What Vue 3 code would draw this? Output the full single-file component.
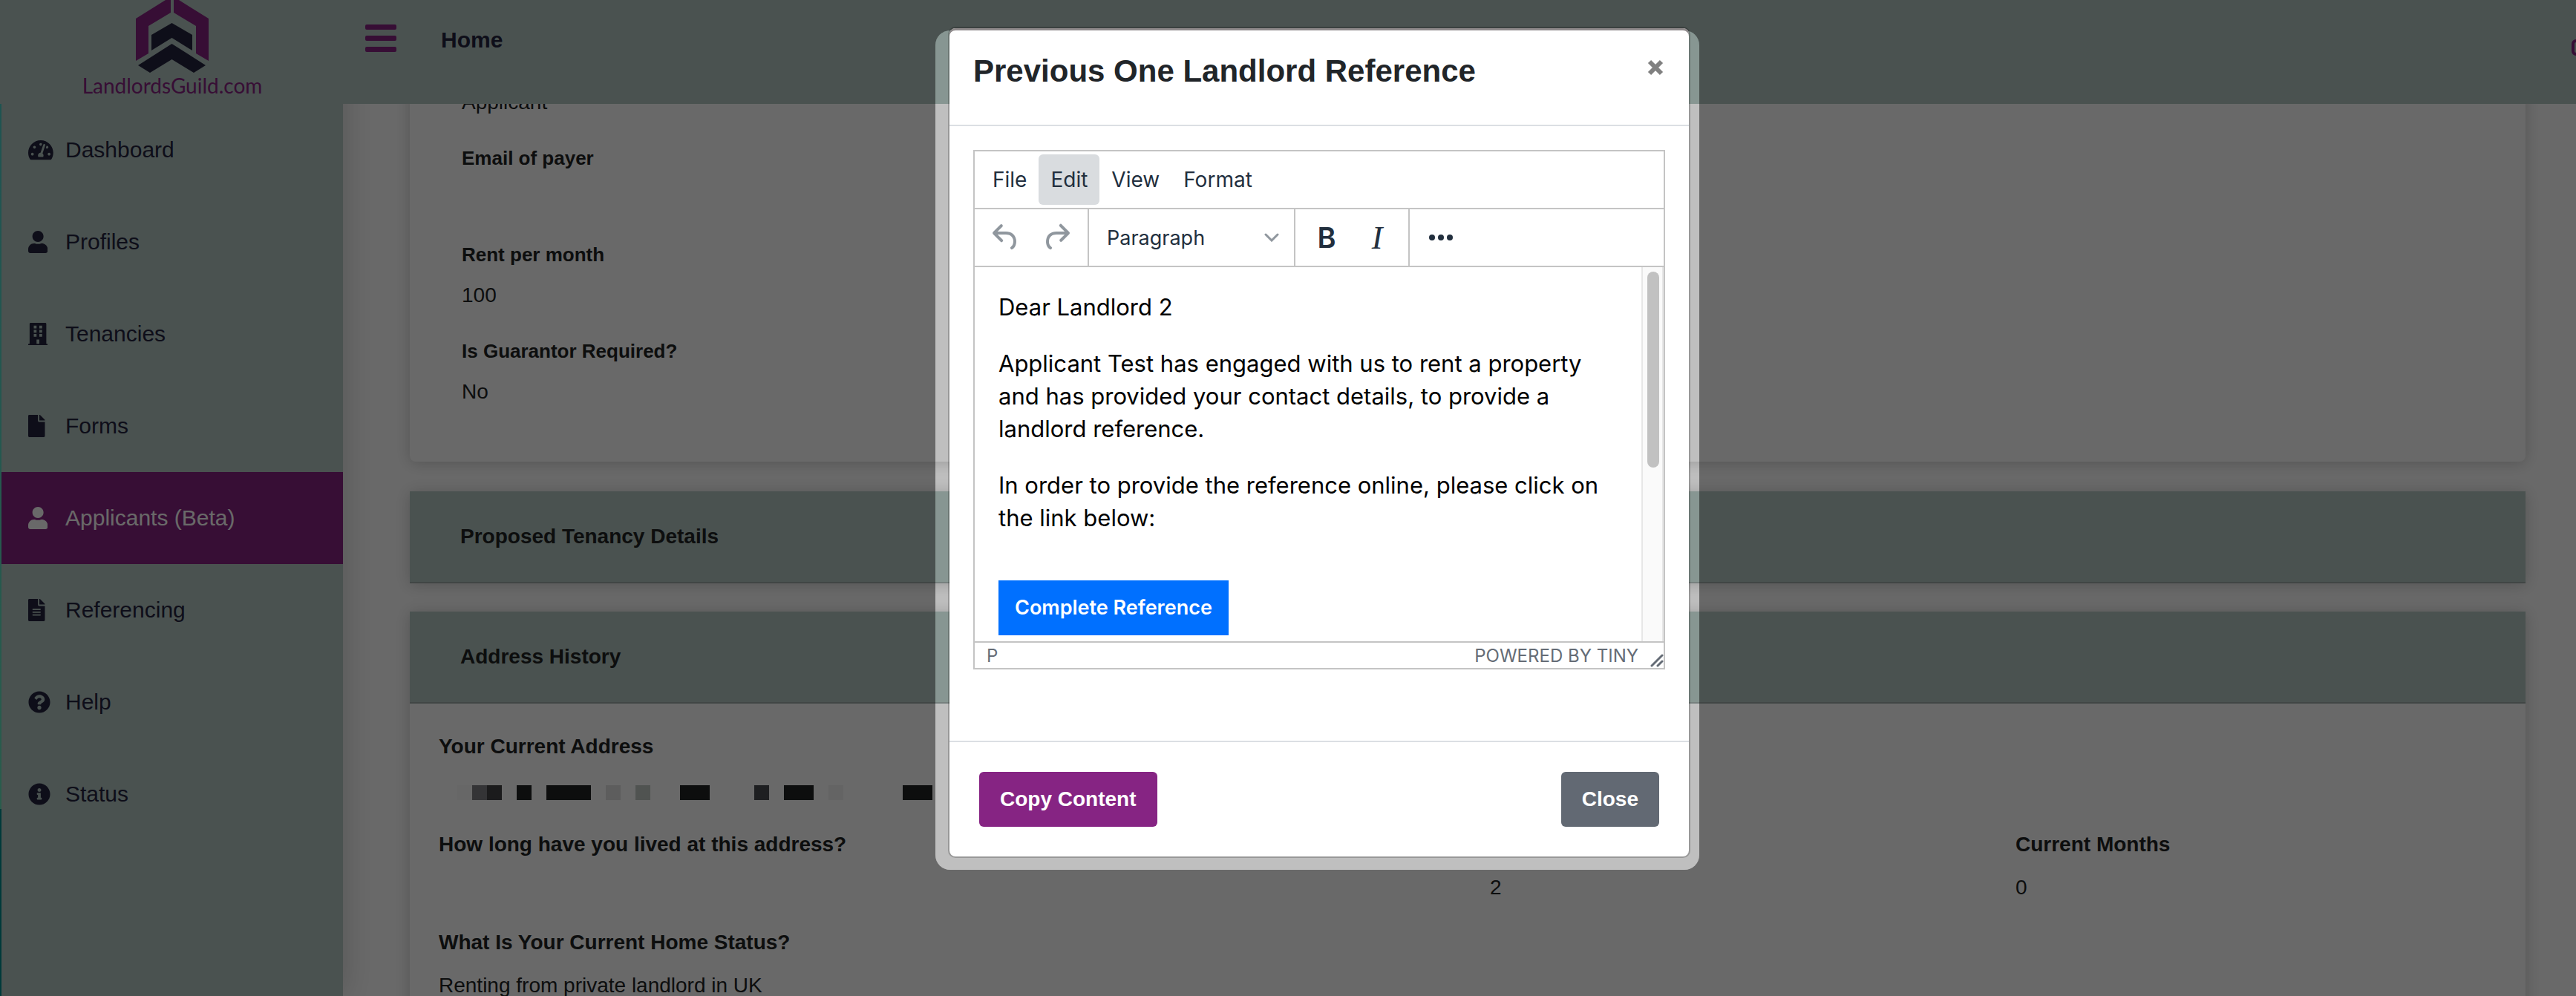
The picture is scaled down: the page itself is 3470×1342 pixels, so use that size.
<script setup>
import { ref } from 'vue'

const icons = {
  gauge: {
    w: 576,
    d: 'M288 32C128.94 32 0 160.94 0 320c0 52.8 14.25 102.26 39.06 144.8 5.61 9.62 16.3 15.2 27.44 15.2h443c11.14 0 21.83-5.58 27.44-15.2C561.75 422.26 576 372.8 576 320c0-159.06-128.94-288-288-288zm0 64c14.71 0 26.58 10.13 30.32 23.65-1.11 2.26-2.64 4.23-3.45 6.67l-9.22 27.67c-5.13 3.49-10.97 6.01-17.64 6.01-17.67 0-32-14.33-32-32S270.33 96 288 96zM96 384c-17.67 0-32-14.33-32-32s14.33-32 32-32 32 14.33 32 32-14.33 32-32 32zm48-160c-17.67 0-32-14.33-32-32s14.33-32 32-32 32 14.33 32 32-14.33 32-32 32zm246.77-72.41l-61.33 184C343.13 347.33 352 364.54 352 384c0 11.72-3.38 22.55-8.88 32H232.88c-5.5-9.45-8.88-20.28-8.88-32 0-33.94 26.5-61.43 59.9-63.59l61.34-184.01c4.17-12.56 17.73-19.45 30.36-15.17 12.57 4.19 19.35 17.79 15.17 30.36zm14.66 57.2l15.52-46.55c3.47-1.29 7.13-2.23 11.05-2.23 17.67 0 32 14.33 32 32s-14.33 32-32 32c-11.38-.01-20.89-6.28-26.57-15.22zM480 384c-17.67 0-32-14.33-32-32s14.33-32 32-32 32 14.33 32 32-14.33 32-32 32z'
  },
  user: {
    w: 448,
    d: 'M224 256c70.7 0 128-57.3 128-128S294.7 0 224 0 96 57.3 96 128s57.3 128 128 128zm89.6 32h-16.7c-22.2 10.2-46.9 16-72.9 16s-50.6-5.8-72.9-16h-16.7C60.2 288 0 348.2 0 422.4V464c0 26.5 21.5 48 48 48h352c26.5 0 48-21.5 48-48v-41.6c0-74.2-60.2-134.4-134.4-134.4z'
  },
  building: {
    w: 448,
    d: 'M56 0H392a24 24 0 0 1 24 24V480H436a12 12 0 0 1 12 12V512H0V492a12 12 0 0 1 12-12H32V24A24 24 0 0 1 56 0zM128 64V128H192V64zM256 64V128H320V64zM128 160V224H192V160zM256 160V224H320V160zM128 256V320H192V256zM256 256V320H320V256zM192 384V480H256V384z'
  },
  file: {
    w: 384,
    d: 'M224 136V0H24C10.7 0 0 10.7 0 24v464c0 13.3 10.7 24 24 24h336c13.3 0 24-10.7 24-24V160H248c-13.2 0-24-10.8-24-24zm160-14.1v6.1H256V0h6.1c6.4 0 12.5 2.5 17 7l97.9 98c4.5 4.5 7 10.6 7 16.9z'
  },
  fileLines: {
    w: 384,
    d: 'M224 136V0H24C10.7 0 0 10.7 0 24v464c0 13.3 10.7 24 24 24h336c13.3 0 24-10.7 24-24V160H248c-13.2 0-24-10.8-24-24zm64 236c0 6.6-5.4 12-12 12H108c-6.6 0-12-5.4-12-12v-8c0-6.6 5.4-12 12-12h168c6.6 0 12 5.4 12 12v8zm0-64c0 6.6-5.4 12-12 12H108c-6.6 0-12-5.4-12-12v-8c0-6.6 5.4-12 12-12h168c6.6 0 12 5.4 12 12v8zm0-72v8c0 6.6-5.4 12-12 12H108c-6.6 0-12-5.4-12-12v-8c0-6.6 5.4-12 12-12h168c6.6 0 12 5.4 12 12zm96-114.1v6.1H256V0h6.1c6.4 0 12.5 2.5 17 7l97.9 98c4.5 4.5 7 10.6 7 16.9z'
  },
  question: {
    w: 512,
    d: 'M504 256c0 136.997-111.043 248-248 248S8 392.997 8 256C8 119.083 119.043 8 256 8s248 111.083 248 248zM262.655 90c-54.497 0-89.255 22.957-116.549 63.758-3.536 5.286-2.353 12.415 2.715 16.258l34.699 26.31c5.205 3.947 12.621 3.008 16.665-2.122 17.864-22.658 30.113-35.797 57.303-35.797 20.429 0 45.698 13.148 45.698 32.958 0 14.976-12.363 22.667-32.534 33.976C247.128 238.528 216 254.941 216 296v4c0 6.627 5.373 12 12 12h56c6.627 0 12-5.373 12-12v-1.333c0-28.462 83.186-29.647 83.186-106.667 0-58.002-60.165-102-116.531-102zM256 338c-25.365 0-46 20.635-46 46 0 25.364 20.635 46 46 46s46-20.636 46-46c0-25.365-20.635-46-46-46z'
  },
  info: {
    w: 512,
    d: 'M256 8C119.043 8 8 119.083 8 256c0 136.997 111.043 248 248 248s248-111.003 248-248C504 119.083 392.957 8 256 8zm0 110c23.196 0 42 18.804 42 42s-18.804 42-42 42-42-18.804-42-42 18.804-42 42-42zm56 254c0 6.627-5.373 12-12 12h-88c-6.627 0-12-5.373-12-12v-24c0-6.627 5.373-12 12-12h12v-64h-12c-6.627 0-12-5.373-12-12v-24c0-6.627 5.373-12 12-12h64c6.627 0 12 5.373 12 12v100h12c6.627 0 12 5.373 12 12v24z'
  }
}

const nav = [
  { label: 'Dashboard', icon: 'gauge' },
  { label: 'Profiles', icon: 'user' },
  { label: 'Tenancies', icon: 'building' },
  { label: 'Forms', icon: 'file' },
  { label: 'Applicants (Beta)', icon: 'user', active: true },
  { label: 'Referencing', icon: 'fileLines' },
  { label: 'Help', icon: 'question' },
  { label: 'Status', icon: 'info' }
]

// Shade of each block in the masked address line; empty entries are blanks.
const mask = [
  '#f9f9f9', '#7e7e83', '#424246', '', '#202224', '', '#202224', '#202224',
  '#202224', '', '#e2e2e2', '', '#c2c9c5', '', '', '#202224', '#202224', '',
  '', '', '#494b50', '', '#202224', '#202224', '', '#f3f3f3', '', '', '', '',
  '#202224', '#202224'
]

const menus = ['File', 'Edit', 'View', 'Format']
const openMenu = ref('Edit')
const block = ref('Paragraph')
</script>

<template>
  <div class="shell">
    <header class="topbar">
      <a class="brand" href="#">
        <svg class="brand-mark" viewBox="184 0 98 98" aria-hidden="true">
          <path class="roof" d="M184 25 224 0H231V17L201 35V72L184 82zM282 25 242 0H235V17L265 35V72L282 82z" />
          <path class="chevrons" d="M232.500 31 260 47V68L232.500 51 205 68V47zM232.500 59 278 88 262 98 232.500 80 203 98 187 88z" />
        </svg>
        <span>LandlordsGuild.com</span>
      </a>
      <button class="burger" type="button" aria-label="Toggle menu"><i></i><i></i><i></i></button>
      <a class="home" href="#">Home</a>
      <button class="signout" type="button" aria-label="Sign out">
        <svg viewBox="0 0 28 22"><path d="M11 2H6a4 4 0 0 0-4 4V16a4 4 0 0 0 4 4H11M10 11H25M18 4 25 11 18 18" /></svg>
      </button>
    </header>

    <nav class="sidebar">
      <a v-for="item in nav" :key="item.label" href="#" class="nav-item" :class="{ active: item.active }">
        <span class="nav-icon">
          <svg :viewBox="`0 0 ${icons[item.icon].w} 512`" aria-hidden="true">
            <path fill-rule="evenodd" :d="icons[item.icon].d" />
          </svg>
        </span>
        <span>{{ item.label }}</span>
      </a>
    </nav>

    <main class="content">
      <section class="card details">
        <p class="value">Applicant</p>
        <h4>Email of payer</h4>
        <p class="value"></p>
        <h4>Rent per month</h4>
        <p class="value">100</p>
        <h4>Is Guarantor Required?</h4>
        <p class="value">No</p>
      </section>

      <section class="card">
        <h3 class="card-head">Proposed Tenancy Details</h3>
      </section>

      <section class="card history">
        <h3 class="card-head">Address History</h3>
        <div class="card-body">
          <div class="field wide">
            <h4>Your Current Address</h4>
            <p class="value mask">
              <i v-for="(shade, i) in mask" :key="i" :style="{ background: shade || 'transparent' }"></i>
            </p>
          </div>
          <div class="field">
            <h4>How long have you lived at this address?</h4>
            <p class="value"></p>
          </div>
          <div class="field">
            <h4></h4>
            <p class="value">2</p>
          </div>
          <div class="field">
            <h4>Current Months</h4>
            <p class="value">0</p>
          </div>
          <div class="field wide">
            <h4>What Is Your Current Home Status?</h4>
            <p class="value">Renting from private landlord in UK</p>
          </div>
        </div>
      </section>
    </main>

    <div class="backdrop">
      <div class="dialog-wrap">
        <div class="dialog" role="dialog" aria-labelledby="dialog-title">
          <div class="dialog-head">
            <h2 id="dialog-title">Previous One Landlord Reference</h2>
            <button class="dismiss" type="button" aria-label="Dismiss">
              <svg viewBox="0 0 22 22"><path d="M3 3 19 19M19 3 3 19" /></svg>
            </button>
          </div>

          <div class="dialog-body">
            <div class="editor">
              <div class="menubar">
                <button v-for="m in menus" :key="m" type="button" :class="{ open: m === openMenu }" @click="openMenu = m">{{ m }}</button>
              </div>
              <div class="toolbar">
                <div class="group">
                  <button type="button" class="muted" aria-label="Undo">
                    <svg viewBox="0 0 24 24"><path d="M6.400 8H12c3.700 0 6.200 2 6.800 5.100.6 2.700-.4 5.600-2.300 6.800a1 1 0 0 1-1-1.800c1.100-.6 1.800-2.700 1.400-4.600-.5-2.100-2.100-3.500-4.900-3.500H6.400l3.300 3.300a1 1 0 1 1-1.400 1.400l-5-5a1 1 0 0 1 0-1.400l5-5a1 1 0 0 1 1.400 1.400L6.400 8z" /></svg>
                  </button>
                  <button type="button" class="muted" aria-label="Redo">
                    <svg viewBox="0 0 24 24"><path d="M17.600 10H12c-2.800 0-4.400 1.400-4.900 3.500-.4 2 .3 4 1.400 4.600a1 1 0 1 1-1 1.800c-2-1.200-2.900-4.100-2.300-6.800.6-3 3-5.100 6.800-5.100h5.600l-3.300-3.300a1 1 0 1 1 1.400-1.400l5 5a1 1 0 0 1 0 1.400l-5 5a1 1 0 0 1-1.400-1.400l3.300-3.300z" /></svg>
                  </button>
                </div>
                <div class="group format">
                  <select v-model="block" aria-label="Block format">
                    <option>Paragraph</option>
                  </select>
                  <svg viewBox="0 0 20 12" aria-hidden="true"><path d="M2 2 10 10 18 2" /></svg>
                </div>
                <div class="group">
                  <button type="button" class="bold" aria-label="Bold">B</button>
                  <button type="button" class="italic" aria-label="Italic">I</button>
                </div>
                <div class="group">
                  <button type="button" class="more" aria-label="More"><i></i><i></i><i></i></button>
                </div>
              </div>
              <div class="edit-area">
                <div class="letter">
                  <p>Dear Landlord 2</p>
                  <p>Applicant Test has engaged with us to rent a property and has provided your contact details, to provide a landlord reference.</p>
                  <p>In order to provide the reference online, please click on the link below:</p>
                  <a class="cta" href="#">Complete Reference</a>
                </div>
                <div class="track"><div class="thumb"></div></div>
              </div>
              <div class="statusbar">
                <span>P</span>
                <a href="#">POWERED BY TINY</a>
                <svg viewBox="0 0 18 18" aria-hidden="true"><path d="M2 16 16 2M10 16 16 10" /></svg>
              </div>
            </div>
          </div>

          <div class="dialog-foot">
            <button type="button" class="btn primary">Copy Content</button>
            <button type="button" class="btn secondary">Close</button>
          </div>
        </div>
      </div>
    </div>
  </div>
</template>

<style>
body {
  margin: 0;
  background: #fff;
}
</style>

<style scoped>
* {
  box-sizing: border-box;
}
.shell {
  position: relative;
  height: 100vh;
  overflow: hidden;
  background: #fff;
  color: #202224;
  font-family: "Liberation Sans", Arial, sans-serif;
  font-size: 28px;
}
h2, h3, h4, p {
  margin: 0;
}
button {
  border: 0;
  padding: 0;
  background: none;
  font-family: inherit;
  color: inherit;
  cursor: pointer;
}
a {
  color: inherit;
  text-decoration: none;
}

.topbar {
  position: absolute;
  inset: 0 0 auto 0;
  z-index: 2;
  height: 140px;
  display: flex;
  align-items: flex-start;
  background: #b4c8c3;
  color: #24223e;
}
.brand {
  width: 460px;
  margin-left: 2px;
  display: flex;
  flex-direction: column;
  align-items: center;
  color: #872380;
  font-family: Lato, "Open Sans", sans-serif;
  font-size: 28px;
  line-height: 34px;
}
.brand-mark {
  width: 98px;
  height: 98px;
}
.roof {
  fill: #872380;
}
.chevrons {
  fill: #24223e;
}
.burger {
  width: 42px;
  margin: 33px 60px 0 30px;
  display: flex;
  flex-direction: column;
  gap: 8px;
}
.burger i {
  height: 7px;
  border-radius: 2px;
  background: #872380;
}
.home {
  margin-top: 34px;
  font-size: 30px;
  font-weight: bold;
  line-height: 40px;
}
.signout {
  flex: none;
  width: 28px;
  margin: 53px -22px 0 auto;
}
.signout svg {
  display: block;
  fill: none;
  stroke: #872380;
  stroke-width: 4;
}

.sidebar {
  position: absolute;
  inset: 0 auto 0 0;
  z-index: 1;
  width: 462px;
  padding: 140px 0 0 2px;
  background: linear-gradient(#49c8c8 0, #66e0b8 1090px, #008d8d 1090px) 0 0 / 2px 100% no-repeat #b4c8c3;
  box-shadow: 0 0 40px rgba(0, 0, 0, 0.2);
  color: #24223e;
  font-size: 30px;
}
.nav-item {
  height: 124px;
  padding-left: 36px;
  display: flex;
  align-items: center;
}
.nav-icon {
  width: 50px;
  display: flex;
}
.nav-icon svg {
  height: 30px;
  fill: currentColor;
}
.active {
  background: #872380;
  color: #fff;
}

.content {
  margin-left: 462px;
  padding: 0 68px 0 90px;
}
.card {
  margin-bottom: 38px;
  background: #fff;
  box-shadow: 0 2px 20px rgba(0, 0, 0, 0.2);
}
.details {
  margin-bottom: 40px;
  padding: 118px 70px 39px;
  border-radius: 8px;
}
.details h4 {
  margin-bottom: 15px;
  font-size: 26px;
}
.details .value {
  margin-bottom: 35px;
}
h4 {
  height: 40px;
  line-height: 40px;
  font-size: 28px;
}
.value {
  height: 40px;
  line-height: 40px;
}
.card-head {
  height: 124px;
  padding-left: 68px;
  border-bottom: 2px solid #9eaba8;
  background: #b4c8c3;
  font-size: 28px;
  line-height: 122px;
}
.card-body {
  padding: 38px 10px 38px 8px;
  display: grid;
  grid-template-columns: 2fr 1fr 1fr;
  row-gap: 34px;
}
.field {
  padding-left: 31px;
}
.field h4 {
  margin-bottom: 18px;
}
.wide {
  grid-column: 1 / -1;
}
.mask {
  display: flex;
  align-items: flex-end;
  padding: 0 0 6px 25px;
}
.mask i {
  width: 20px;
  height: 20px;
}

.backdrop {
  position: absolute;
  inset: 0;
  z-index: 3;
  overflow: hidden;
  display: flex;
  justify-content: center;
  align-items: flex-start;
  padding: 36px 0 0 84px;
}
.dialog-wrap {
  position: relative;
  isolation: isolate;
  width: 1000px;
}
/* Lighter frame round the dialog; its shadow dims the rest of the page. */
.dialog-wrap::before {
  content: "";
  position: absolute;
  inset: 5px -12px -16px -17px;
  z-index: -1;
  border-radius: 20px;
  background: rgba(0, 0, 0, 0.25);
  box-shadow: 0 0 0 4000px rgba(0, 0, 0, 0.588);
}
.dialog {
  border: 2px solid rgba(0, 0, 0, 0.2);
  border-radius: 10px;
  background: #fff;
  background-clip: padding-box;
  box-shadow: inset 0 3px 0 #8f8a8b;
}
.dialog-head {
  display: flex;
  justify-content: space-between;
  align-items: flex-start;
  padding: 28px 32px 42px;
  border-bottom: 2px solid #dbdfe3;
  color: #212529;
}
h2 {
  font-size: 42px;
  line-height: 60px;
}
.dismiss {
  width: 22px;
  margin: 14px 2px 0 0;
}
.dismiss svg {
  display: block;
  fill: none;
  stroke: #808080;
  stroke-width: 6;
}
.dialog-body {
  padding: 32px 32px 96px;
}
.editor {
  border: 2px solid #c4c4c4;
  color: #222f3e;
  font-family: Inter, sans-serif;
}
.menubar {
  height: 78px;
  padding: 4px 8px;
  display: flex;
  border-bottom: 2px solid #c4c4c4;
}
.menubar button {
  height: 68px;
  padding: 0 16px;
  border-radius: 6px;
  font-size: 28px;
}
.menubar .open {
  background: #d9dcdf;
}
.toolbar {
  height: 78px;
  display: flex;
  border-bottom: 2px solid #c4c4c4;
}
.group {
  display: flex;
  align-items: center;
  padding: 0 8px;
  border-right: 2px solid #c4c4c4;
}
.group:last-child {
  border-right: 0;
}
.group button {
  width: 68px;
  height: 68px;
  display: flex;
  align-items: center;
  justify-content: center;
}
.group button svg {
  width: 48px;
  fill: currentColor;
}
.group .muted {
  color: #90979e;
}
.format {
  position: relative;
  width: 278px;
}
.format select {
  width: 100%;
  height: 56px;
  padding: 0 16px;
  border: 0;
  appearance: none;
  background: none;
  color: inherit;
  font-family: inherit;
  font-size: 27px;
}
.format svg {
  position: absolute;
  right: 20px;
  width: 20px;
  pointer-events: none;
  fill: none;
  stroke: #90979e;
  stroke-width: 3;
  stroke-linecap: round;
}
.group .bold {
  font-size: 38px;
  font-weight: 600;
}
.group .italic {
  font-family: "Liberation Serif", serif;
  font-size: 44px;
  font-style: italic;
}
.group .more {
  gap: 4px;
}
.more i {
  width: 8px;
  height: 8px;
  border-radius: 50%;
  background: #222f3e;
}
.edit-area {
  height: 504px;
  display: flex;
  overflow: hidden;
}
.letter {
  flex: 1;
  padding: 32px;
  color: #000;
  font-size: 31px;
  line-height: 44px;
}
.letter p {
  margin-bottom: 32px;
}
.cta {
  display: inline-block;
  margin-top: 30px;
  padding: 0 22px;
  background: #0070ff;
  color: #fff;
  font-size: 27px;
  font-weight: 600;
  line-height: 74px;
}
.track {
  width: 30px;
  padding: 6px 4px 0 6px;
  border: solid #e7e7e7;
  border-width: 0 2px;
  background: #fafafa;
}
.thumb {
  width: 16px;
  height: 264px;
  border-radius: 8px;
  background: #c1c1c1;
}
.statusbar {
  height: 36px;
  display: flex;
  align-items: center;
  padding-left: 16px;
  border-top: 2px solid #c4c4c4;
  color: #656c76;
  font-size: 24px;
}
.statusbar a {
  margin-left: auto;
}
.statusbar svg {
  width: 18px;
  margin: 14px 0 0 16px;
  fill: none;
  stroke: #656c76;
  stroke-width: 3;
  stroke-linecap: round;
}
.dialog-foot {
  display: flex;
  justify-content: space-between;
  padding: 40px;
  border-top: 2px solid #dbdfe3;
}
.btn {
  height: 74px;
  padding: 0 28px;
  border-radius: 6px;
  color: #fff;
  font-size: 28px;
  font-weight: bold;
}
.primary {
  background: #862483;
}
.secondary {
  background: #626973;
}
</style>
